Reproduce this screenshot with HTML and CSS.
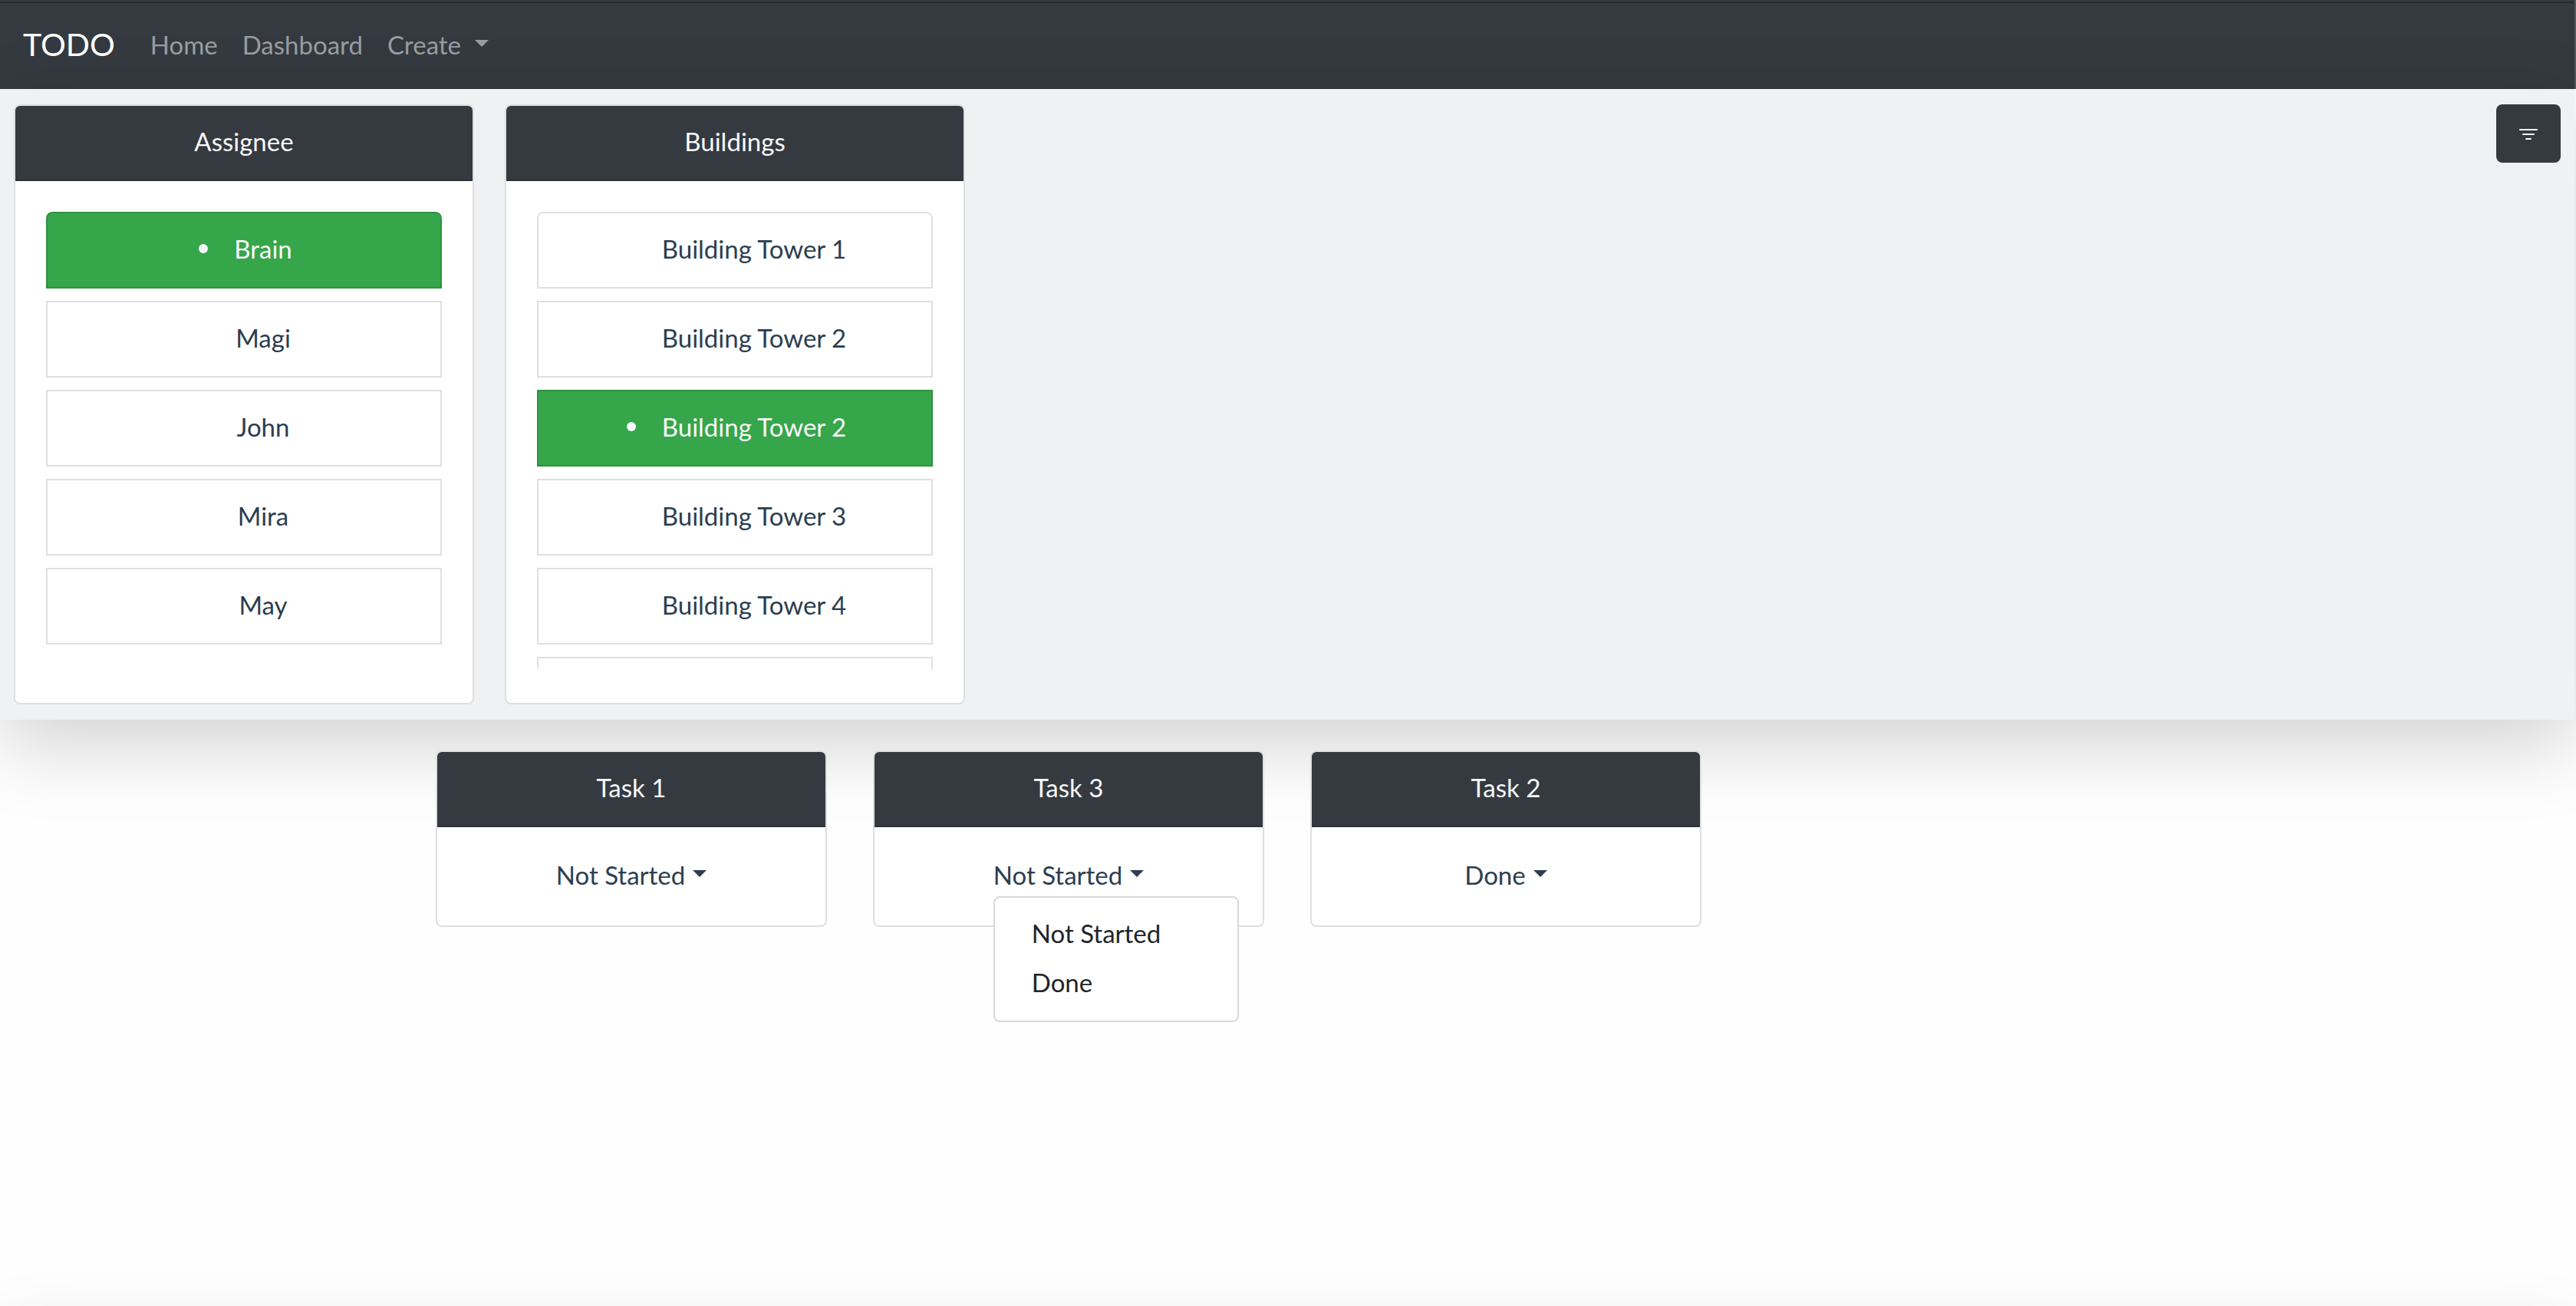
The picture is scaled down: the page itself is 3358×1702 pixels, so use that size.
FILE: index.html
```html
<!DOCTYPE html>
<html lang="en">
<head>
<meta charset="utf-8">
<title>TODO</title>
<meta name="viewport" content="width=device-width, initial-scale=1">
<link rel="stylesheet" href="styles.css">
</head>
<body>
<div class="page">
  <nav class="navbar">
    <a class="brand" href="#">TODO</a>
    <a class="nav-link" href="#">Home</a>
    <a class="nav-link" href="#">Dashboard</a>
    <button class="nav-link nav-toggle" type="button">Create<span class="caret"></span></button>
  </nav>

  <section class="filters">
    <div class="card filter-card">
      <h2 class="card-header">Assignee</h2>
      <div class="card-body">
        <ul class="options">
          <li><button class="option selected" type="button"><span class="dot"></span>Brain</button></li>
          <li><button class="option" type="button"><span class="dot"></span>Magi</button></li>
          <li><button class="option" type="button"><span class="dot"></span>John</button></li>
          <li><button class="option" type="button"><span class="dot"></span>Mira</button></li>
          <li><button class="option" type="button"><span class="dot"></span>May</button></li>
        </ul>
      </div>
    </div>
    <div class="card filter-card">
      <h2 class="card-header">Buildings</h2>
      <div class="card-body">
        <ul class="options">
          <li><button class="option" type="button"><span class="dot"></span>Building Tower 1</button></li>
          <li><button class="option" type="button"><span class="dot"></span>Building Tower 2</button></li>
          <li><button class="option selected" type="button"><span class="dot"></span>Building Tower 2</button></li>
          <li><button class="option" type="button"><span class="dot"></span>Building Tower 3</button></li>
          <li><button class="option" type="button"><span class="dot"></span>Building Tower 4</button></li>
          <li><button class="option" type="button"><span class="dot"></span></button></li>
        </ul>
      </div>
    </div>
    <button class="filter-button" type="button" aria-label="Filter">
      <svg width="32" height="32" viewBox="0 0 32 32" fill="#fff" aria-hidden="true">
        <rect x="4" y="10" width="24" height="2" rx="1"/>
        <rect x="8" y="16" width="16" height="2" rx="1"/>
        <rect x="12" y="22" width="8" height="2" rx="1"/>
      </svg>
    </button>
  </section>

  <main class="tasks">
    <article class="card">
      <h2 class="card-header">Task 1</h2>
      <div class="card-body">
        <div class="dropdown">
          <button class="status" type="button">Not Started<span class="caret"></span></button>
        </div>
      </div>
    </article>
    <article class="card">
      <h2 class="card-header">Task 3</h2>
      <div class="card-body">
        <div class="dropdown">
          <button class="status" type="button" aria-expanded="true">Not Started<span class="caret"></span></button>
          <div class="menu">
            <a class="menu-item" href="#">Not Started</a>
            <a class="menu-item" href="#">Done</a>
          </div>
        </div>
      </div>
    </article>
    <article class="card">
      <h2 class="card-header">Task 2</h2>
      <div class="card-body">
        <div class="dropdown">
          <button class="status" type="button">Done<span class="caret"></span></button>
        </div>
      </div>
    </article>
  </main>
  <div class="drawer"></div>
</div>
</body>
</html>
```
FILE: styles.css
```css
* { box-sizing: border-box; }

body {
  margin: 0;
  background: #fefefe;
  color: #2c3e50;
  font: 33px/44px Lato, "Noto Sans", sans-serif;
}

button {
  font: inherit;
  color: inherit;
  border: 0;
  padding: 0;
  background: none;
  cursor: pointer;
}

a { text-decoration: none; }

.page {
  position: relative;
  min-height: 100vh;
  overflow: hidden;
  padding-right: 2px;
}

.navbar {
  display: flex;
  align-items: center;
  height: 116px;
  margin-right: -2px;
  padding: 0 30px;
  border-right: 2px solid #50565a;
  background: linear-gradient(#353a40 2px, #262a2c 2px, #262a2c 4px, #353a40 4px);
}

.brand {
  margin-right: 30px;
  color: #fff;
  font-size: 41px;
}

.nav-link {
  padding: 0 16px;
  color: #999c9f;
}

.caret {
  display: inline-block;
  margin-left: 10px;
  vertical-align: 10px;
  border: 9px solid transparent;
  border-top-color: currentColor;
  border-bottom: 0;
}

.nav-toggle .caret { margin-left: 18px; }

.filters {
  display: flex;
  align-items: flex-start;
  gap: 40px;
  padding: 20px 18px;
  background: #eff1f3;
  box-shadow: 0 32px 96px rgba(0, 0, 0, 0.175);
}

.card {
  border: 2px solid #dfdfdf;
  border-radius: 8px;
  background: #fff;
  text-align: center;
}

.filter-card { width: 600px; }

.card-header {
  margin: 0;
  padding: 24px 40px 28px;
  border-bottom: 2px solid #2f3338;
  border-radius: 6px 6px 0 0;
  background: #353a40;
  color: #f8f9fa;
  font-size: 33px;
  font-weight: 400;
}

.card-body { padding: 40px; }

.options {
  display: flex;
  flex-direction: column;
  gap: 16px;
  height: 600px;
  margin: 0;
  padding: 0;
  overflow: hidden;
  border-radius: 8px;
  list-style: none;
}

.option {
  display: flex;
  align-items: center;
  justify-content: center;
  width: 100%;
  height: 100px;
  padding: 0 0 4px 4px;
  border: 2px solid #dfdfdf;
}

li:first-child .option { border-radius: 8px 8px 0 0; }

.option.selected {
  border-color: #2f9141;
  background: #36a64a;
  color: #f8f9fa;
}

.dot {
  width: 12px;
  height: 12px;
  margin-right: 34px;
  border-radius: 50%;
}

.selected .dot { background: #f8f9fa; }

.filter-button {
  display: flex;
  align-items: center;
  justify-content: center;
  width: 84px;
  height: 76px;
  margin-left: auto;
  border-radius: 8px;
  background: #353a40;
}

.tasks {
  display: grid;
  grid-template-columns: repeat(4, 1fr);
  gap: 60px;
  max-width: 2280px;
  margin: 0 auto;
  padding: 40px 30px;
}

.dropdown {
  position: relative;
  display: inline-block;
  padding-bottom: 4px;
  vertical-align: top;
}

.status { display: block; }

.menu {
  position: absolute;
  z-index: 1;
  top: 100%;
  left: 0;
  width: 320px;
  margin-top: 2px;
  padding: 16px 0;
  border: 2px solid #d9d9d9;
  border-radius: 8px;
  background: #fff;
  text-align: left;
}

.menu-item {
  display: block;
  padding: 8px 48px 12px;
  color: #212529;
}

/* Closed bottom drawer: only its shadow reaches the page */
.drawer {
  position: absolute;
  top: 100%;
  left: 0;
  right: 0;
  height: 200px;
  margin-top: 16px;
  box-shadow: 0 32px 96px rgba(0, 0, 0, 0.175);
}
```
